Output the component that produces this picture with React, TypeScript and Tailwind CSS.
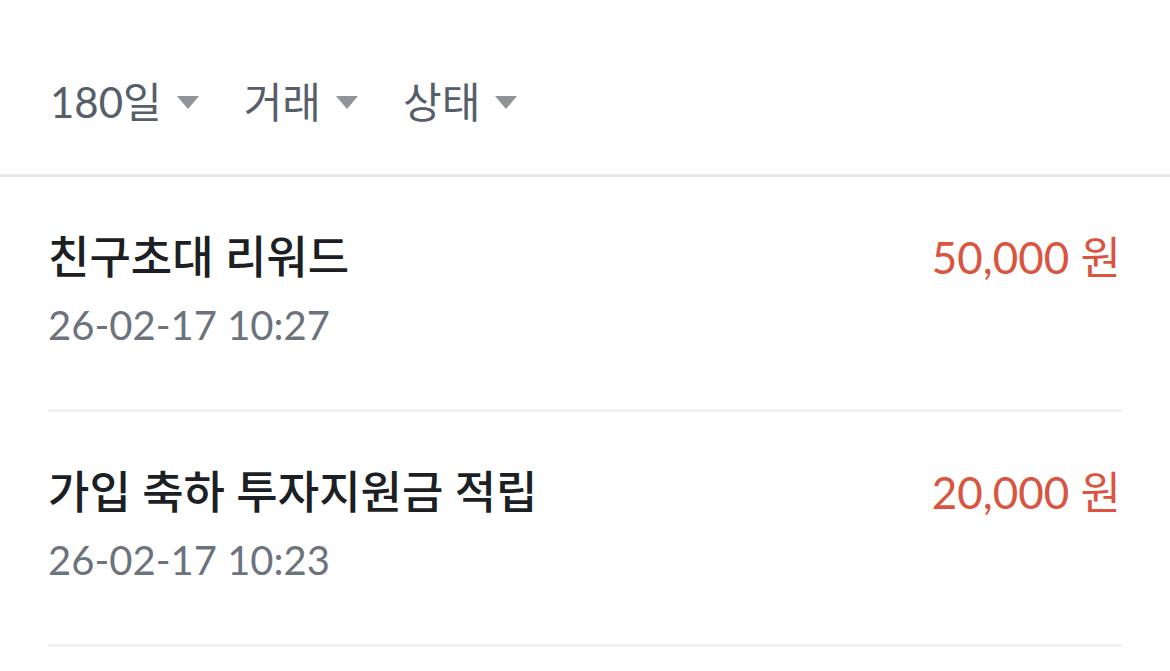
const FILTERS = ['180일', '거래', '상태'];

const ROWS = [
  { title: '친구초대 리워드', date: '26-02-17 10:27', amount: '50,000 원' },
  { title: '가입 축하 투자지원금 적립', date: '26-02-17 10:23', amount: '20,000 원' },
];

function Caret() {
  return (
    <svg width="22" height="13" viewBox="0 0 22 13" className="shrink-0">
      <path d="M0 0 L22 0 L11 13 Z" fill="#909499" />
    </svg>
  );
}

export default function App() {
  return (
    <div
      className="w-[1170px] h-[671px] overflow-hidden bg-white"
      style={{ fontFamily: 'Lato, "Noto Sans CJK KR", sans-serif' }}
    >
      <div className="flex items-center gap-[45px] pl-[50px] pt-[78px] pb-[48px]">
        {FILTERS.map((f) => (
          <div key={f} className="flex items-center gap-[15px]">
            <span className="text-[42px] leading-[48px] text-[#565e69]">{f}</span>
            <Caret />
          </div>
        ))}
      </div>
      <div className="h-[3px] bg-[#e6e7e9]" />

      <div className="px-[48px]">
        {ROWS.map((r) => (
          <div key={r.date} className="flex justify-between pt-[56px] pb-[60px] border-b-[3px] border-[#f0f1f2]">
            <div>
              <div className="text-[45px] leading-[48px] font-medium text-[#1c1f24]">{r.title}</div>
              <div className="mt-[20px] text-[40px] leading-[48px] text-[#6c737c]">{r.date}</div>
            </div>
            <div className="text-[44px] leading-[48px] text-[#d9553f] pr-[1px]">{r.amount}</div>
          </div>
        ))}
      </div>
    </div>
  );
}
